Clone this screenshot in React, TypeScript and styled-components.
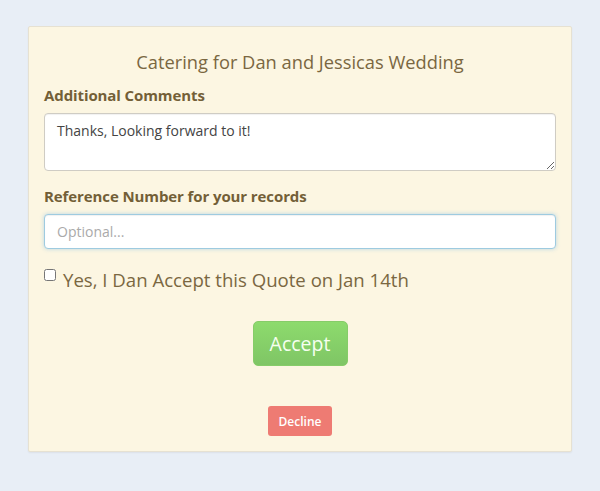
import React from "react";
import styled, { createGlobalStyle } from "styled-components";

const Global = createGlobalStyle`
  html, body { margin: 0; padding: 0; background: #e8eef6; }
  body { font-family: "Open Sans", "DejaVu Sans", sans-serif; }
  * { box-sizing: border-box; }
`;

const Page = styled.div`
  width: 600px;
  height: 491px;
  padding: 26px 28px 0 28px;
`;

const Panel = styled.div`
  width: 544px;
  height: 426px;
  background: #fcf6e2;
  border: 1px solid #e6e1d2;
  border-radius: 2px;
  box-shadow: 0 1px 2px rgba(0, 0, 0, 0.06);
  padding: 0 15px;
  display: flex;
  flex-direction: column;
`;

const Title = styled.h1`
  margin: 23px 0 0 0;
  font-size: 18.3px;
  line-height: 24px;
  font-weight: 400;
  color: #7a6741;
  text-align: center;
`;

const Label = styled.label<{ $top: number }>`
  display: block;
  margin-top: ${(p) => p.$top}px;
  font-size: 15px;
  line-height: 20px;
  font-weight: 700;
  color: #735f37;
  letter-spacing: -0.1px;
`;

const TextArea = styled.textarea`
  margin-top: 8px;
  width: 512px;
  height: 58px;
  border: 1px solid #cfccc4;
  border-radius: 4px;
  background: #fff;
  padding: 7px 12px;
  font-family: inherit;
  font-size: 14px;
  line-height: 20px;
  color: #444;
  resize: vertical;
  outline: none;
  box-shadow: inset 0 1px 1px rgba(0, 0, 0, 0.06);
`;

const Input = styled.input`
  margin-top: 8px;
  width: 512px;
  height: 35px;
  border: 1px solid #9ecbe0;
  border-radius: 4px;
  background: #fff;
  padding: 6px 12px;
  font-family: inherit;
  font-size: 14px;
  color: #444;
  outline: none;
  box-shadow: inset 0 1px 1px rgba(0, 0, 0, 0.06), 0 0 4px rgba(102, 175, 233, 0.45);
  &::placeholder { color: #aaa; }
`;

const CheckRow = styled.label`
  margin-top: 19px;
  display: flex;
  align-items: flex-start;
  gap: 7px;
  font-size: 18.6px;
  line-height: 24px;
  color: #7a6741;
`;

const Check = styled.input`
  margin: 1px 0 0 0;
  width: 12px;
  height: 12px;
`;

const Center = styled.div<{ $top: number }>`
  display: flex;
  justify-content: center;
  margin-top: ${(p) => p.$top}px;
`;

const AcceptButton = styled.button`
  width: 95px;
  height: 45px;
  border: 1px solid #86cc69;
  border-radius: 5px;
  background: linear-gradient(#8ddb6d, #7fc565);
  color: #f6fff0;
  font-family: inherit;
  font-size: 19.5px;
  font-weight: 400;
  cursor: pointer;
`;

const DeclineButton = styled.button`
  width: 64px;
  height: 30px;
  border: none;
  border-radius: 3px;
  background: #ee7b73;
  color: #fff;
  font-family: inherit;
  font-size: 12px;
  font-weight: 600;
  cursor: pointer;
`;

export default function App() {
  return (
    <>
      <Global />
      <Page>
        <Panel>
          <Title>Catering for Dan and Jessicas Wedding</Title>
          <Label $top={11}>Additional Comments</Label>
          <TextArea defaultValue="Thanks, Looking forward to it!" />
          <Label $top={15}>Reference Number for your records</Label>
          <Input placeholder="Optional..." autoFocus />
          <CheckRow>
            <Check type="checkbox" />
            <span>Yes, I Dan Accept this Quote on Jan 14th</span>
          </CheckRow>
          <Center $top={29}>
            <AcceptButton>Accept</AcceptButton>
          </Center>
          <Center $top={40}>
            <DeclineButton>Decline</DeclineButton>
          </Center>
        </Panel>
      </Page>
    </>
  );
}
